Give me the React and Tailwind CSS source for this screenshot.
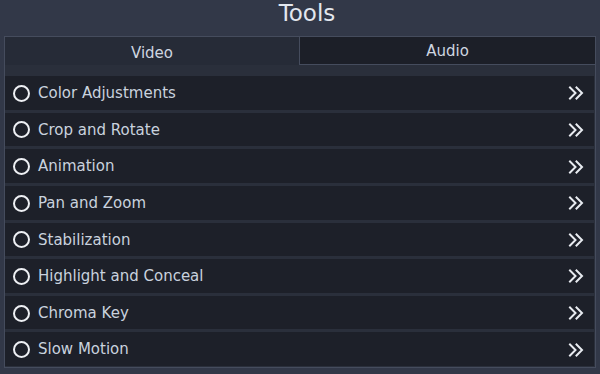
import React from 'react';

const tools = [
  'Color Adjustments',
  'Crop and Rotate',
  'Animation',
  'Pan and Zoom',
  'Stabilization',
  'Highlight and Conceal',
  'Chroma Key',
  'Slow Motion',
];

function Chevrons() {
  return (
    <svg width="16" height="16" viewBox="0 0 16 16" fill="none" stroke="#e8ebf0" strokeWidth="2" strokeLinecap="square">
      <path d="M2 2.5 L7.5 8 L2 13.5" />
      <path d="M8.5 2.5 L14 8 L8.5 13.5" />
    </svg>
  );
}

export default function App() {
  return (
    <div className="w-[600px] h-[374px] bg-[#323848] flex flex-col overflow-hidden" style={{ fontFamily: 'Tahoma, "DejaVu Sans", sans-serif' }}>
      {/* Title */}
      <div className="h-[36px] flex items-start justify-center pl-[14px] pt-[2px] text-[23px] text-[#e3e7ee] leading-none">
        Tools
      </div>

      {/* Panel */}
      <div className="mx-[4px] border border-[#454c5d] bg-[#2a2f3b] flex flex-col">
        {/* Tabs */}
        <div className="h-[28px] flex text-[15px]">
          <div className="flex-1 bg-[#262b37] flex items-center justify-center pt-[4px] text-[#cfd6e0]">Video</div>
          <div className="w-[296px] bg-[#1c1f28] border-l border-b border-[#454c5d] flex items-center justify-center pt-[2px] text-[#cfd6e0]">Audio</div>
        </div>

        {/* Rows */}
        <div className="h-[302px] pt-[11px] pb-[1px] flex flex-col gap-[3px] pr-[1px]">
          {tools.map(name => (
            <div key={name} className="flex-1 bg-[#1d2029] flex items-center pl-[8px] pr-[10px] pt-[1px]">
              <span className="w-[17px] h-[17px] rounded-full border-2 border-[#eef0f4] shrink-0" />
              <span className="ml-[8px] text-[15px] text-[#c9d2de] flex-1">{name}</span>
              <Chevrons />
            </div>
          ))}
        </div>
      </div>
    </div>
  );
}
